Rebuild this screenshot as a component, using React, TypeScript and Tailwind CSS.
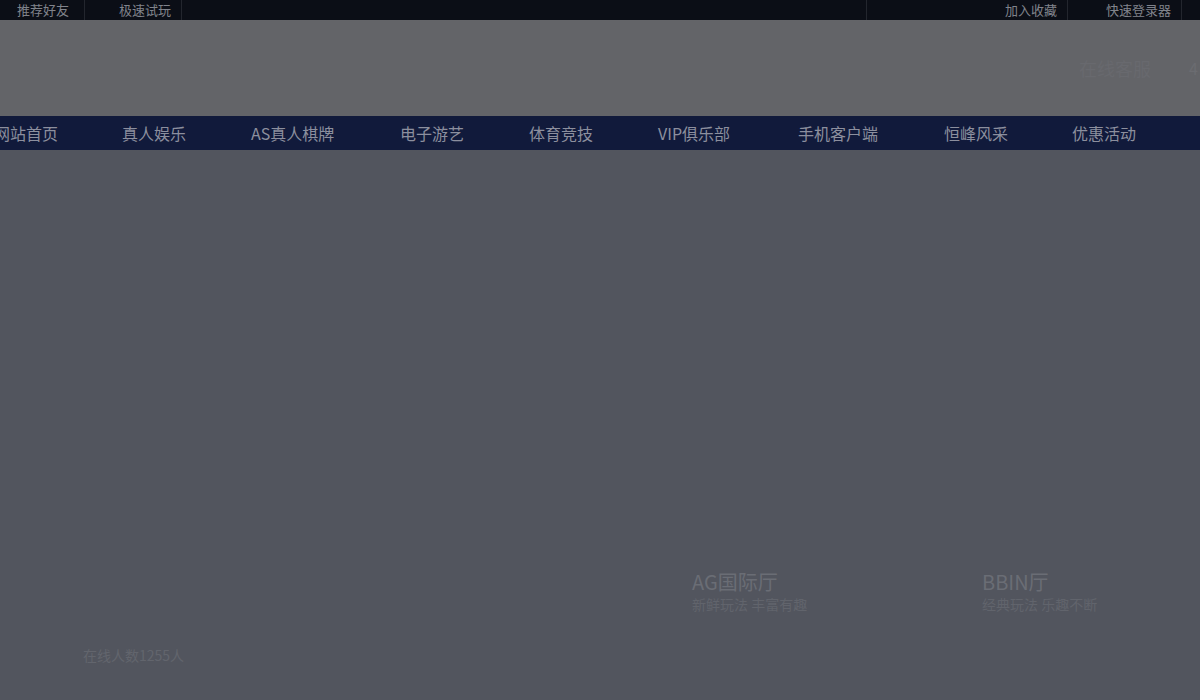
import React from "react";

// widths reproduce each menu item's left edge in the screenshot
const navItems = [
  { label: "网站首页", w: "w-[128px]" },
  { label: "真人娱乐", w: "w-[129px]" },
  { label: "AS真人棋牌", w: "w-[149px]" },
  { label: "电子游艺", w: "w-[129px]" },
  { label: "体育竞技", w: "w-[129px]" },
  { label: "VIP俱乐部", w: "w-[140px]" },
  { label: "手机客户端", w: "w-[146px]" },
  { label: "恒峰风采", w: "w-[128px]" },
  { label: "优惠活动", w: "w-[128px]" },
];

const font = { fontFamily: '"Noto Sans CJK SC", "Liberation Sans", sans-serif' };

export default function App() {
  return (
    <div className="h-[700px] w-[1200px] overflow-hidden bg-[#52555e]" style={font}>
      {/* top bar */}
      <div className="flex h-[20px] items-center justify-between bg-[#0b0e16] text-[13px] leading-[20px] text-[#80838b]">
        <div className="flex h-full">
          <div className="h-full w-[85px] border-r border-[#23262e] pl-[17px]">推荐好友</div>
          <div className="h-full w-[97px] border-r border-[#23262e] pl-[34px]">极速试玩</div>
        </div>
        <div className="flex h-full border-l border-[#23262e] pl-[138px]">
          <div className="h-full w-[63px] border-r border-[#23262e]">加入收藏</div>
          <div className="h-full w-[114px] border-r border-[#23262e] pl-[38px]">快速登录器</div>
          <div className="w-[18px]" />
        </div>
      </div>

      {/* header */}
      <div className="flex h-[96px] items-center justify-end bg-[#636468] pr-[2px]">
        <span className="mr-[38px] text-[18px] text-[#68696e]">在线客服</span>
        <span className="text-[16px] text-[#6b6c71]">4</span>
      </div>

      {/* nav */}
      <div className="flex h-[34px] items-center overflow-hidden bg-[#111a3b] text-[16px] text-[#8c8f9e]">
        <div className="-ml-[6px] flex shrink-0 items-center">
          {navItems.map((n) => (
            <span key={n.label} className={`${n.w} shrink-0 whitespace-nowrap`}>
              {n.label}
            </span>
          ))}
        </div>
      </div>

      {/* body */}
      <div className="h-[550px]">
        <div className="flex pl-[692px] pt-[419px]">
          <div className="w-[290px]">
            <div className="text-[20px] leading-[26px] text-[#6a6d75]">AG国际厅</div>
            <div className="text-[14px] leading-[18px] text-[#61646c]">新鲜玩法 丰富有趣</div>
          </div>
          <div>
            <div className="text-[20px] leading-[26px] text-[#6a6d75]">BBIN厅</div>
            <div className="text-[14px] leading-[18px] text-[#61646c]">经典玩法 乐趣不断</div>
          </div>
        </div>
        <div className="pl-[83px] pt-[33px] text-[14px] leading-[18px] text-[#62656d]">在线人数1255人</div>
      </div>
    </div>
  );
}
